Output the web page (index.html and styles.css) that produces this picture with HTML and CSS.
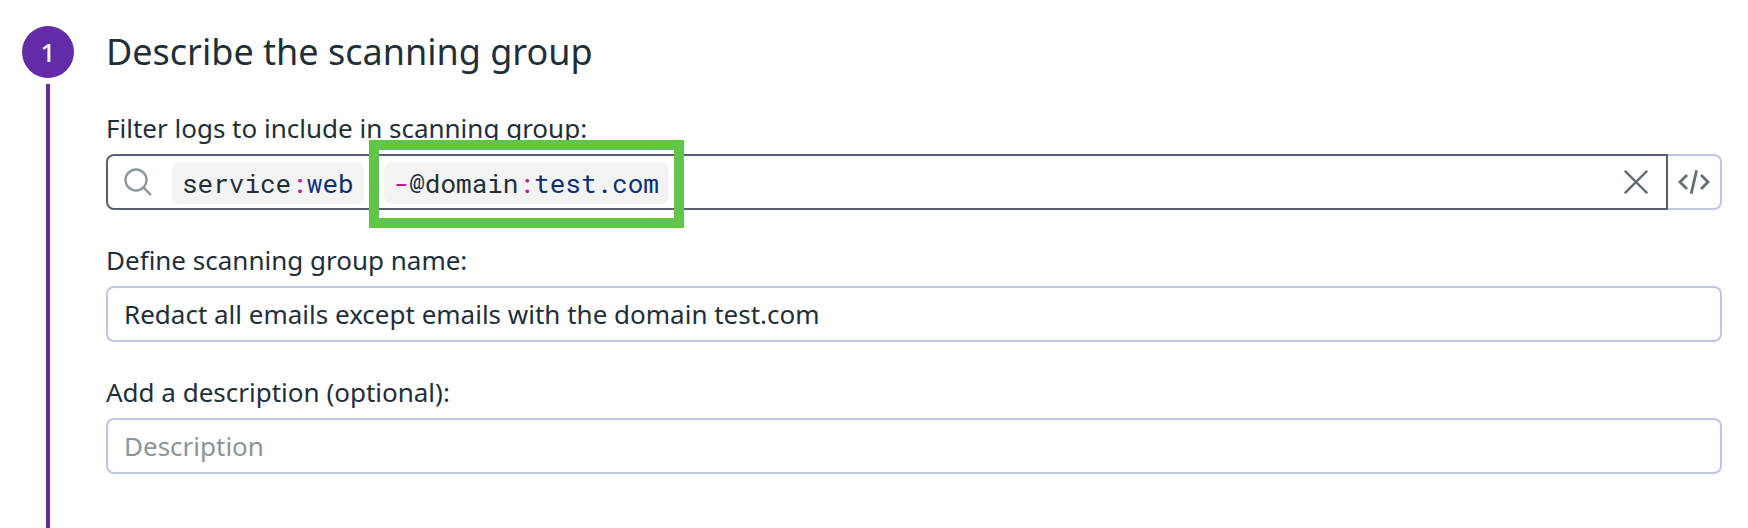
FILE: index.html
```html
<!DOCTYPE html>
<html lang="en">
<head>
<meta charset="utf-8">
<meta name="viewport" content="width=device-width, initial-scale=1">
<title>Describe the scanning group</title>
<link rel="stylesheet" href="styles.css">
</head>
<body>
<main class="step">
  <div class="step-rail">
    <span class="step-number">1</span>
    <span class="step-line"></span>
  </div>
  <form class="step-body">
    <h1 class="step-title">Describe the scanning group</h1>

    <div class="field">
      <label class="field-label" for="query">Filter logs to include in scanning group:</label>
      <div class="query">
        <div class="query-box">
          <svg class="search-icon" viewBox="0 0 28 28" aria-hidden="true"><circle cx="12" cy="12" r="10.5"/><path d="M19.4 19.4 L27 27"/></svg>
          <div class="tokens">
            <span class="token">service<span class="op">:</span><span class="value">web</span></span>
            <span class="token token-marked"><span class="op">-</span>@domain<span class="op">:</span><span class="value">test.com</span></span>
          </div>
          <input class="query-input" id="query" type="text">
          <button class="icon-button" type="button" aria-label="Clear"><svg class="clear-icon" viewBox="0 0 24 24"><path d="M0.8 0.8 L23.2 23.2 M23.2 0.8 L0.8 23.2"/></svg></button>
        </div>
        <button class="code-button" type="button" aria-label="Edit as code"><svg class="code-icon" viewBox="0 0 32 24"><path d="M9 5 L2 12 L9 19 M18.6 0.3 L13.2 23.7 M23 5 L30 12 L23 19"/></svg></button>
      </div>
    </div>

    <div class="field">
      <label class="field-label" for="name">Define scanning group name:</label>
      <input class="text-input" id="name" type="text" value="Redact all emails except emails with the domain test.com">
    </div>

    <div class="field">
      <label class="field-label" for="description">Add a description (optional):</label>
      <input class="text-input" id="description" type="text" placeholder="Description">
    </div>
  </form>
</main>
</body>
</html>
```
FILE: styles.css
```css
* {
  box-sizing: border-box;
}

body {
  margin: 0;
  background: #fff;
  color: #1f2f38;
  font-family: "Noto Sans", sans-serif;
  font-size: 26px;
  line-height: 36px;
}

.step {
  display: flex;
  gap: 32px;
  min-height: 100vh;
  padding: 26px 26px 0 22px;
}

.step-rail {
  display: flex;
  flex-direction: column;
  align-items: center;
  gap: 6px;
}

.step-number {
  display: flex;
  align-items: center;
  justify-content: center;
  width: 52px;
  height: 52px;
  border-radius: 50%;
  background: #632ca6;
  color: #fff;
  font-weight: 500;
}

.step-line {
  flex: 1;
  width: 4px;
  background: #632ca6;
}

.step-body {
  display: flex;
  flex: 1;
  flex-direction: column;
  gap: 32px;
  min-width: 0;
  padding-bottom: 54px;
}

.step-title {
  margin: 0;
  font-size: 36px;
  font-weight: 400;
  line-height: 52px;
}

.field {
  display: flex;
  flex-direction: column;
  gap: 8px;
}

.text-input {
  width: 100%;
  height: 56px;
  padding: 0 16px;
  border: 2px solid #c0c7df;
  border-radius: 8px;
  background: transparent;
  color: inherit;
  font: inherit;
}

.text-input::placeholder {
  color: #8d9599;
  opacity: 1;
}

.query {
  display: flex;
  height: 56px;
}

.query-box {
  display: flex;
  flex: 1;
  align-items: center;
  min-width: 0;
  padding: 0 18px 0 16px;
  border: 2px solid #585f70;
  border-radius: 8px 0 0 8px;
}

.search-icon {
  flex: none;
  width: 28px;
  height: 28px;
  margin-right: 20px;
  fill: none;
  stroke: #8d9699;
  stroke-width: 2.4;
}

.tokens {
  display: flex;
  gap: 20px;
  padding-top: 2px;
}

.token {
  position: relative;
  padding: 3px 10px;
  border-radius: 8px;
  background: #f3f3f4;
  font-family: "Roboto Mono", "DejaVu Sans Mono", monospace;
  font-size: 26px;
  white-space: nowrap;
}

.token-marked::after {
  position: absolute;
  inset: -22px -15px -24px;
  border: 10px solid #61c545;
  content: "";
}

.op {
  color: #c9149c;
}

.value {
  color: #0c2f74;
}

.query-input {
  flex: 1;
  min-width: 0;
  height: 100%;
  border: 0;
  outline: 0;
  background: transparent;
  color: inherit;
  font: inherit;
}

.icon-button {
  display: flex;
  padding: 0;
  border: 0;
  background: transparent;
}

.clear-icon {
  width: 24px;
  height: 24px;
  fill: none;
  stroke: #626d74;
  stroke-width: 2.4;
}

.code-button {
  display: flex;
  align-items: center;
  justify-content: center;
  width: 54px;
  padding: 0;
  border: 2px solid #c0c7df;
  border-left: 0;
  border-radius: 0 8px 8px 0;
  background: transparent;
}

.code-icon {
  width: 32px;
  height: 24px;
  fill: none;
  stroke: #626d74;
  stroke-width: 2.8;
}
```
